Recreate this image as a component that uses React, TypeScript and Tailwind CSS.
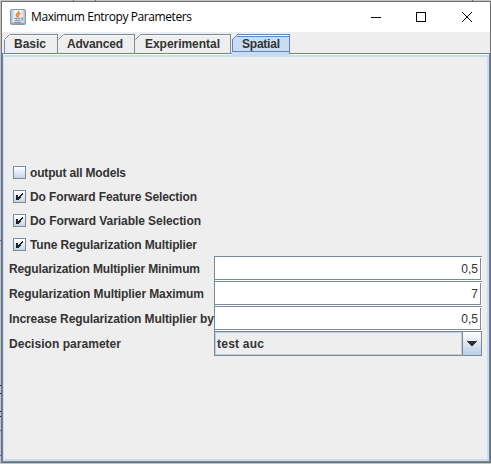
import React from "react";

type TabProps = { label: string; width: string; textX: string; textWidth: number; first?: boolean };

function Label({ children, width, className = "" }: { children: string; width: number; className?: string }) {
  return (
    <svg width={width} height="16" className={`block shrink-0 overflow-visible ${className}`}>
      <text x="0" y="12" textLength={width} lengthAdjust="spacing" fill="#333333">{children}</text>
    </svg>
  );
}

function Tab({ label, width, textX, textWidth, first }: TabProps) {
  return (
    <div className={`relative h-[19px] shrink-0 ${width}`}>
      <svg className="absolute inset-0 h-full w-full" shapeRendering="crispEdges" fill="none" stroke="#7a8a99">
        <path d="M6 .5H400" />
        {first && <path d="M.5 6V19" />}
        <path d="M.5 5.5L5.5 .5" shapeRendering="auto" />
        <path d="M6 1.5H400" stroke="#f8f8f8" />
      </svg>
      <div className="absolute inset-y-0 right-0 w-px bg-[#7a8a99]" />
      <div className={`relative pt-[2px] ${textX}`}><Label width={textWidth}>{label}</Label></div>
    </div>
  );
}

function CheckRow({ label, checked, width }: { label: string; checked: boolean; width: number }) {
  return (
    <div className="flex h-6 items-center pl-[9px]">
      <div className="flex h-[13px] w-[13px] shrink-0 border border-[#7a8a99] bg-linear-to-b from-white to-[#c0d5e8]">
        {checked && (
          <svg width="11" height="11" viewBox="0 0 11 11" shapeRendering="crispEdges" fill="#222">
            <path d="M2 4h2v5H2zM4 6h1v3H4zM5 5h1v3H5zM6 4h1v3H6zM7 3h1v2H7zM8 2h1v2H8z" />
          </svg>
        )}
      </div>
      <Label width={width} className="ml-1 mt-[2px]">{label}</Label>
    </div>
  );
}

function FieldRow({ label, value, width }: { label: string; value: string; width: number }) {
  return (
    <div className="flex h-[25px] items-center pl-[5px]">
      <div className="w-[205px] shrink-0"><Label width={width}>{label}</Label></div>
      <div className="flex h-[25px] w-[268px] flex-col border-l border-t border-[#7a8a99] bg-white">
        <div className="mr-px mt-px flex h-[22px] items-center justify-end border-b border-r border-[#7a8a99] pr-[2px] text-[12px] font-normal leading-4 text-[#333]">
          {value}
        </div>
      </div>
    </div>
  );
}

function JavaIcon() {
  return (
    <svg width="16" height="16" viewBox="0 0 16 16" fill="none">
      <defs>
        <linearGradient id="plate" x1="0" y1="0" x2="1" y2="0">
          <stop stopColor="#a3b6c5" /><stop offset=".3" stopColor="#f3f5f7" /><stop offset=".7" stopColor="#f3f5f7" /><stop offset="1" stopColor="#a3b6c5" />
        </linearGradient>
      </defs>
      <rect x=".5" y=".5" width="15" height="15" rx="1" fill="url(#plate)" stroke="#8299aa" />
      <path d="M1 14.5H15" stroke="#8da5b8" />
      <path d="M8.6 1.8C10 4 5.5 4.6 6.3 6.4L7.4 8M10.5 4.2C8 5.3 8.2 6 8.7 7.8" stroke="#ef7d20" strokeWidth="1.5" />
      <path d="M4.5 9.3h6M5 11.3h5.4M4 13.3h7.5M11 9c2.5-.4 2 2-.2 2.4" stroke="#4d7391" strokeWidth=".9" />
    </svg>
  );
}

export default function App() {
  return (
    <div className="relative h-[464px] w-[491px] overflow-hidden bg-[#c4c4c4] pl-px pt-px font-['Liberation_Sans',Arial,sans-serif] text-[12px] font-bold leading-4 text-[#333]">
      <svg className="absolute left-0 top-0" width="491" height="464" shapeRendering="crispEdges" stroke="#222">
        <path d="M0 385.5H1M0 393.5H1M0 411.5H1M0 416.5H1" />
        <path d="M0 240.5H1M0 430.5H1M0 455.5H1M73.5 0V1M95.5 0V1M472.5 0V1" stroke="#666" />
      </svg>
      <div className="relative flex h-[462px] w-[490px] flex-col border border-[#707070] bg-[#eee]">
        <header className="flex h-[30px] shrink-0 items-center bg-white pl-2">
          <JavaIcon />
          <svg width="162" height="20" className="ml-[5px] block overflow-visible font-['Open_Sans','Noto_Sans',sans-serif] text-[12px] font-normal">
            <text x="0" y="14" textLength="161" lengthAdjust="spacing" fill="#000">Maximum Entropy Parameters</text>
          </svg>
          <svg width="103" height="12" className="ml-[178px] shrink-0" fill="none" stroke="#000">
            <path d="M0 6.5H10M45.5 1.5H54.5V10.5H45.5Z" shapeRendering="crispEdges" />
            <path d="M91 1L101 11M101 1L91 11" />
          </svg>
        </header>
        <nav className="flex h-[21px] shrink-0 items-start pl-[2px] pt-[2px]">
          <Tab label="Basic" width="w-[54px]" textX="pl-[10px]" textWidth={32} first />
          <Tab label="Advanced" width="w-[77px]" textX="pl-[9px]" textWidth={56} />
          <Tab label="Experimental" width="w-[96px]" textX="pl-[10px]" textWidth={75} />
          <div className="relative z-10 ml-px h-[22px] w-[59px]">
            <svg className="absolute inset-0" width="59" height="22" shapeRendering="crispEdges" fill="none" stroke="#6382bf">
              <path d="M0 6L6 0H58V21H0Z" fill="#c8ddf2" stroke="none" />
              <path d="M5.5 1.5H57" stroke="#fff" />
              <path d="M.5 18V5.5L5.5.5H57.5V20M1 17.5H57M5 2.5H57" />
            </svg>
            <div className="relative pl-[10px] pt-[2px]"><Label width={38}>Spatial</Label></div>
          </div>
        </nav>
        <main className="flex min-h-0 flex-1 flex-col border border-r-[#6382bf] border-b-[#7a8a99] border-l-[#6382bf] border-t-[#6382bf]">
          <div className="flex flex-1 flex-col border-t border-t-white">
            <div className="flex flex-1 flex-col border-2 border-l-1 border-[#c8ddf2] pt-[103px]">
              <CheckRow label="output all Models" checked={false} width={96} />
              <CheckRow label="Do Forward Feature Selection" checked width={167} />
              <CheckRow label="Do Forward Variable Selection" checked width={171} />
              <CheckRow label="Tune Regularization Multiplier" checked width={167} />
              <FieldRow label="Regularization Multiplier Minimum" value="0,5" width={191} />
              <FieldRow label="Regularization Multiplier Maximum" value="7" width={195} />
              <FieldRow label="Increase Regularization Multiplier by" value="0,5" width={205} />
              <div className="flex h-[25px] items-center pl-[5px]">
                <div className="w-[205px] shrink-0"><Label width={112}>Decision parameter</Label></div>
                <div className="flex h-[25px] w-[268px] border border-[#7a8a99]">
                  <div className="flex flex-1 items-center border border-[#b8cfe5] pl-px"><Label width={47}>test auc</Label></div>
                  <div className="flex w-[19px] items-center justify-center border-l border-[#7a8a99] bg-linear-to-b from-white to-[#b8cfe5]">
                    <svg width="10" height="5" shapeRendering="crispEdges" fill="#333"><path d="M0 0H10V1H9V2H8V3H7V4H6V5H4V4H3V3H2V2H1V1H0Z" /></svg>
                  </div>
                </div>
              </div>
            </div>
          </div>
        </main>
      </div>
    </div>
  );
}
